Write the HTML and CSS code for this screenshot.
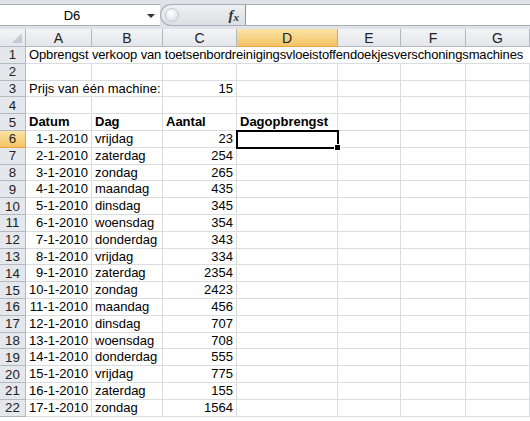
FILE: index.html
```html
<!DOCTYPE html>
<html lang="nl">
<head>
    <meta charset="UTF-8">
    <title>Opbrengst verkoop</title>
    <link rel="stylesheet" href="styles.css">
</head>
<body>

<!-- Formulebalk -->
<div class="formula-bar">
    <div class="name-box">
        <span class="name-text">D6</span>
        <span class="name-arrow"></span>
    </div>
    <div class="fx-pill">
        <span class="pill-knob"></span>
        <span class="fx">f<sub>x</sub></span>
    </div>
    <div class="formula-input"></div>
</div>

<!-- Werkblad -->
<div class="sheet">
    <div class="hdr corner"></div>
    <div class="hdr col">A</div>
    <div class="hdr col">B</div>
    <div class="hdr col">C</div>
    <div class="hdr col sel">D</div>
    <div class="hdr col">E</div>
    <div class="hdr col">F</div>
    <div class="hdr col">G</div>

    <div class="hdr row">1</div>
    <div class="cell span-all title">Opbrengst verkoop van toetsenbordreinigingsvloeistoffendoekjesverschoningsmachines</div>

    <div class="hdr row">2</div>
    <div class="cell"></div><div class="cell"></div><div class="cell"></div><div class="cell"></div><div class="cell"></div><div class="cell"></div><div class="cell"></div>

    <div class="hdr row">3</div>
    <div class="cell span-2">Prijs van één machine:</div>
    <div class="cell num">15</div>
    <div class="cell"></div><div class="cell"></div><div class="cell"></div><div class="cell"></div>

    <div class="hdr row">4</div>
    <div class="cell"></div><div class="cell"></div><div class="cell"></div><div class="cell"></div><div class="cell"></div><div class="cell"></div><div class="cell"></div>

    <div class="hdr row">5</div>
    <div class="cell bold">Datum</div>
    <div class="cell bold">Dag</div>
    <div class="cell bold">Aantal</div>
    <div class="cell bold">Dagopbrengst</div>
    <div class="cell"></div><div class="cell"></div><div class="cell"></div>

    <div class="hdr row sel">6</div>
    <div class="cell num">1-1-2010</div><div class="cell">vrijdag</div><div class="cell num">23</div>
    <div class="cell active"></div><div class="cell"></div><div class="cell"></div><div class="cell"></div>

    <div class="hdr row">7</div>
    <div class="cell num">2-1-2010</div><div class="cell">zaterdag</div><div class="cell num">254</div>
    <div class="cell"></div><div class="cell"></div><div class="cell"></div><div class="cell"></div>

    <div class="hdr row">8</div>
    <div class="cell num">3-1-2010</div><div class="cell">zondag</div><div class="cell num">265</div>
    <div class="cell"></div><div class="cell"></div><div class="cell"></div><div class="cell"></div>

    <div class="hdr row">9</div>
    <div class="cell num">4-1-2010</div><div class="cell">maandag</div><div class="cell num">435</div>
    <div class="cell"></div><div class="cell"></div><div class="cell"></div><div class="cell"></div>

    <div class="hdr row">10</div>
    <div class="cell num">5-1-2010</div><div class="cell">dinsdag</div><div class="cell num">345</div>
    <div class="cell"></div><div class="cell"></div><div class="cell"></div><div class="cell"></div>

    <div class="hdr row">11</div>
    <div class="cell num">6-1-2010</div><div class="cell">woensdag</div><div class="cell num">354</div>
    <div class="cell"></div><div class="cell"></div><div class="cell"></div><div class="cell"></div>

    <div class="hdr row">12</div>
    <div class="cell num">7-1-2010</div><div class="cell">donderdag</div><div class="cell num">343</div>
    <div class="cell"></div><div class="cell"></div><div class="cell"></div><div class="cell"></div>

    <div class="hdr row">13</div>
    <div class="cell num">8-1-2010</div><div class="cell">vrijdag</div><div class="cell num">334</div>
    <div class="cell"></div><div class="cell"></div><div class="cell"></div><div class="cell"></div>

    <div class="hdr row">14</div>
    <div class="cell num">9-1-2010</div><div class="cell">zaterdag</div><div class="cell num">2354</div>
    <div class="cell"></div><div class="cell"></div><div class="cell"></div><div class="cell"></div>

    <div class="hdr row">15</div>
    <div class="cell num">10-1-2010</div><div class="cell">zondag</div><div class="cell num">2423</div>
    <div class="cell"></div><div class="cell"></div><div class="cell"></div><div class="cell"></div>

    <div class="hdr row">16</div>
    <div class="cell num">11-1-2010</div><div class="cell">maandag</div><div class="cell num">456</div>
    <div class="cell"></div><div class="cell"></div><div class="cell"></div><div class="cell"></div>

    <div class="hdr row">17</div>
    <div class="cell num">12-1-2010</div><div class="cell">dinsdag</div><div class="cell num">707</div>
    <div class="cell"></div><div class="cell"></div><div class="cell"></div><div class="cell"></div>

    <div class="hdr row">18</div>
    <div class="cell num">13-1-2010</div><div class="cell">woensdag</div><div class="cell num">708</div>
    <div class="cell"></div><div class="cell"></div><div class="cell"></div><div class="cell"></div>

    <div class="hdr row">19</div>
    <div class="cell num">14-1-2010</div><div class="cell">donderdag</div><div class="cell num">555</div>
    <div class="cell"></div><div class="cell"></div><div class="cell"></div><div class="cell"></div>

    <div class="hdr row">20</div>
    <div class="cell num">15-1-2010</div><div class="cell">vrijdag</div><div class="cell num">775</div>
    <div class="cell"></div><div class="cell"></div><div class="cell"></div><div class="cell"></div>

    <div class="hdr row">21</div>
    <div class="cell num">16-1-2010</div><div class="cell">zaterdag</div><div class="cell num">155</div>
    <div class="cell"></div><div class="cell"></div><div class="cell"></div><div class="cell"></div>

    <div class="hdr row">22</div>
    <div class="cell num">17-1-2010</div><div class="cell">zondag</div><div class="cell num">1564</div>
    <div class="cell"></div><div class="cell"></div><div class="cell"></div><div class="cell"></div>
</div>

</body>
</html>
```

FILE: styles.css
```css
/* Basis */
* {
    margin: 0;
    padding: 0;
    box-sizing: border-box;
}

body {
    font-family: 'Liberation Sans', Arial, sans-serif;
    font-size: 13px;
    color: #000;
    background: #fff;
    overflow: hidden;
}

/* Formulebalk */
.formula-bar {
    display: flex;
    height: 29px;
    padding: 4px 0 3px;
    background: #dfe3e8;
}

.name-box {
    position: relative;
    display: flex;
    align-items: center;
    justify-content: center;
    width: 160px;
    background: #fff;
    border-top: 1px solid #a7aeb7;
    border-bottom: 1px solid #a7aeb7;
}

.name-text {
    margin-right: 16px;
}

.name-arrow {
    position: absolute;
    right: 5px;
    top: 9px;
    border-left: 4px solid transparent;
    border-right: 4px solid transparent;
    border-top: 4px solid #333;
}

.fx-pill {
    display: flex;
    align-items: center;
    justify-content: space-between;
    width: 86px;
    padding: 0 6px 0 4px;
    background: linear-gradient(#eef0f2, #dcdfe3);
    border: 1px solid #a7aeb7;
    border-right: 1px solid #8e959e;
    border-radius: 11px 0 0 11px;
}

.pill-knob {
    width: 14px;
    height: 14px;
    border-radius: 50%;
    background: radial-gradient(circle at 40% 35%, #fff, #d4d8dd);
    border: 1px solid #c4c9cf;
}

.fx {
    font-family: 'Liberation Serif', 'Times New Roman', serif;
    font-style: italic;
    font-weight: bold;
    font-size: 15px;
    color: #333;
}

.fx sub {
    font-size: 11px;
    vertical-align: -1px;
}

.formula-input {
    flex: 1;
    background: #fff;
    border-top: 1px solid #a7aeb7;
    border-bottom: 1px solid #a7aeb7;
}

/* Werkblad */
.sheet {
    display: grid;
    grid-template-columns: 26px 66px 71px 74px 101px 63px 65px 1fr;
    grid-template-rows: 18px;
    grid-auto-rows: 16.8px;
}

.hdr {
    display: flex;
    align-items: center;
    justify-content: center;
    font-size: 14px;
    color: #222;
    background: linear-gradient(#f3f4f6, #e3e6ea);
    border-right: 1px solid #b4b9bf;
    border-bottom: 1px solid #b4b9bf;
}

.hdr.row {
    background: #e4e7eb;
    font-size: 13.3px;
}

.hdr.sel {
    background: linear-gradient(#fbe3a6, #f3c466);
    border-color: #f2a33a;
}

.corner {
    position: relative;
}

.corner::after {
    content: "";
    position: absolute;
    right: 3px;
    bottom: 3px;
    border-left: 10px solid transparent;
    border-bottom: 10px solid #c6cbd1;
}

.cell {
    padding: 0 3px;
    line-height: 16px;
    white-space: nowrap;
    border-right: 1px solid #dadcdd;
    border-bottom: 1px solid #dadcdd;
}

.cell.num {
    text-align: right;
}

.cell.bold {
    font-weight: bold;
}

.span-all {
    grid-column: 2 / -1;
    border-right: none;
}

.title {
    letter-spacing: -0.14px;
}

.span-2 {
    grid-column: span 2;
}

/* Actieve cel */
.cell.active {
    position: relative;
    outline: 2px solid #000;
    outline-offset: -1px;
}

.cell.active::after {
    content: "";
    position: absolute;
    right: -4px;
    bottom: -4px;
    width: 5px;
    height: 5px;
    background: #000;
    border: 1px solid #fff;
}
```
